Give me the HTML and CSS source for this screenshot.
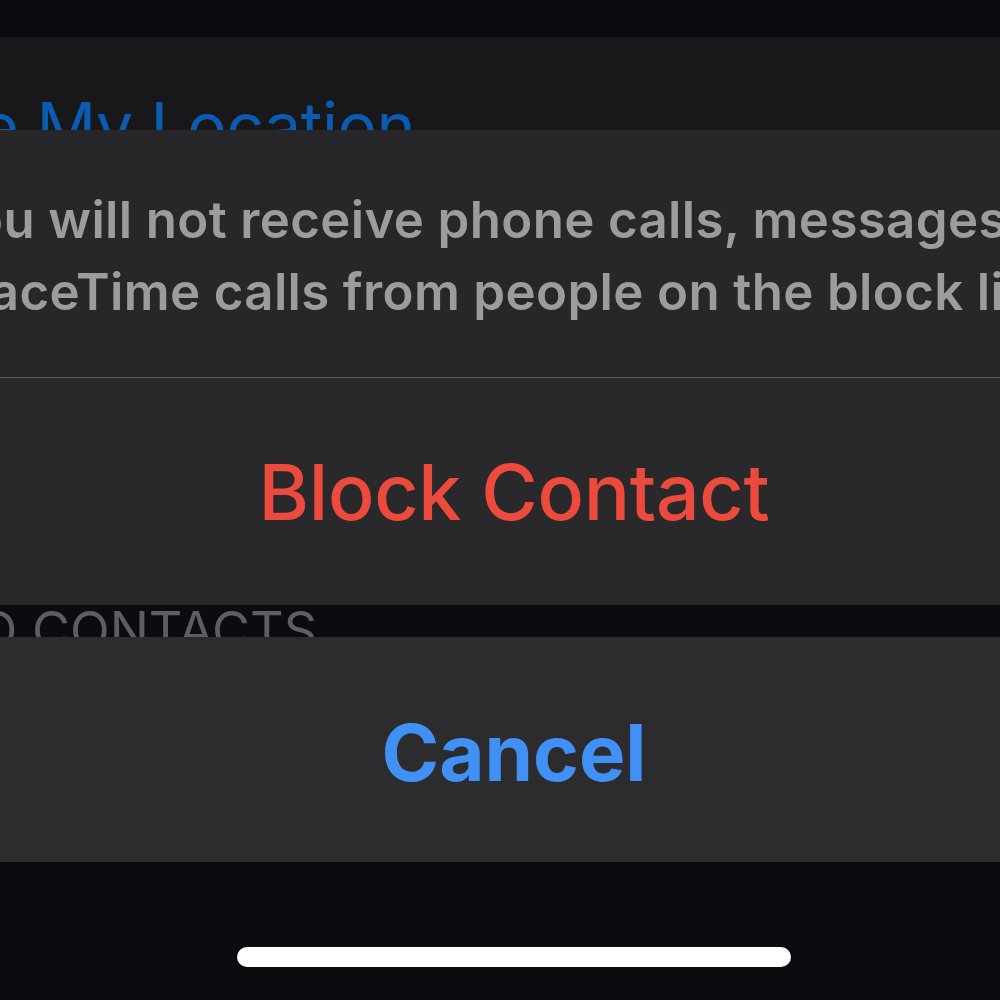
FILE: index.html
```html
<!DOCTYPE html>
<html lang="en">
<head>
  <meta charset="UTF-8" />
  <meta name="viewport" content="width=device-width, initial-scale=1.0"/>
  <title>Block Contact</title>
  <link rel="stylesheet" href="styles.css">
</head>
<body>

<div class="screen">

  <!-- Settings list, dimmed behind the sheet -->
  <div class="backdrop">
    <div class="top-gap"></div>
    <div class="cell">
      <span class="cell-link">Share My Location</span>
    </div>
    <div class="section-header">Blocked Contacts</div>
  </div>

  <!-- Action sheet -->
  <div class="sheet">
    <div class="sheet-group">
      <p class="sheet-message">You will not receive phone calls, messages, or<br>FaceTime calls from people on the block list.</p>
      <button class="sheet-btn destructive">Block Contact</button>
    </div>
    <div class="sheet-group cancel-group">
      <button class="sheet-btn cancel">Cancel</button>
    </div>
  </div>

  <div class="home-indicator"></div>
</div>

</body>
</html>
```

FILE: styles.css
```css
body {
  margin: 0;
  background: #0c0c10;
  font-family: 'Inter', 'Liberation Sans', sans-serif;
  overflow: hidden;
}
.screen {
  position: relative;
  width: 1000px;
  height: 1000px;
  overflow: hidden;
  background: #0c0c10;
}

/* list behind */
.top-gap { height: 37px; }
.cell {
  height: 200px;
  background: #18181a;
  white-space: nowrap;
}
/* both rows are right-anchored so the visible tail sits in place */
.cell-link {
  display: block;
  width: 1000px;
  margin-left: -585px;
  padding-top: 49px;
  text-align: right;
  font-size: 66px;
  letter-spacing: -0.5px;
  line-height: 80px;
  color: #0b5bb0;
}
.section-header {
  width: 1000px;
  margin-left: -683px;
  padding-top: 364px;
  text-align: right;
  white-space: nowrap;
  font-size: 52px;
  line-height: 60px;
  text-transform: uppercase;
  color: #5e5e62;
}

/* sheet */
.sheet {
  position: absolute;
  top: 130px;
  left: -200px;
  width: 1428px;
}
.sheet-group {
  background: #272729;
  display: flex;
  flex-direction: column;
}
.sheet-message {
  margin: 0;
  padding: 54px 0 49px;
  border-bottom: 1px solid #5a5a5c;
  text-align: center;
  font-size: 51px;
  font-weight: 600;
  letter-spacing: 0.35px;
  line-height: 72px;
  color: #9c9c9e;
  white-space: nowrap;
}
.sheet-btn {
  border: none;
  background: transparent;
  font-family: inherit;
  font-size: 77px;
  line-height: 80px;
  height: 227px;
  padding: 0;
  cursor: pointer;
}
.destructive {
  font-weight: 500;
  letter-spacing: -0.3px;
  color: #ec4a3c;
  background: #29292b;
}
.cancel-group {
  margin-top: 32px;
  background: #2c2c2e;
}
.cancel {
  height: 225px;
  padding-top: 6px;
  font-size: 78px;
  font-weight: 700;
  color: #4190f6;
}

.home-indicator {
  position: absolute;
  left: 237px;
  top: 947px;
  width: 554px;
  height: 20px;
  border-radius: 10px;
  background: #fff;
}
```
